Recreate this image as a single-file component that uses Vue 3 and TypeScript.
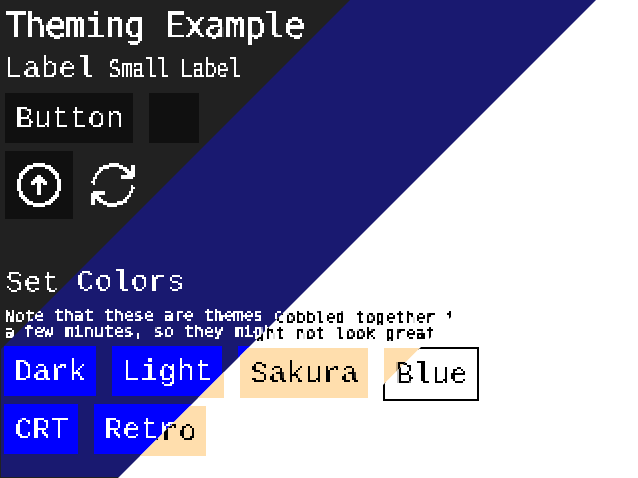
<script setup lang="ts">
type Layer = 'dark' | 'blue' | 'sand' | 'paper'
interface Word { text: string; on: Layer[] }

const layers: Layer[] = ['dark', 'blue', 'sand', 'paper']

const word = (text: string, ...on: Layer[]): Word => ({ text, on })

const heading: Word[] = [word('Set', 'dark'), word('Colors', 'blue')]
const note: Word[][] = [
  [
    word('Note', 'dark', 'blue'),
    ...['that', 'these', 'are', 'themes'].map((t) => word(t, 'blue')),
    word('cobbled', 'blue', 'sand'),
    word('together', 'sand'),
    word('i', 'sand'),
  ],
  [
    word('a', 'dark'),
    ...['few', 'minutes,', 'so', 'they'].map((t) => word(t, 'blue')),
    word('might', 'blue', 'sand'),
    ...['not', 'look', 'great'].map((t) => word(t, 'sand')),
  ],
]
const themes: Word[][] = [
  [word('Dark', 'blue'), word('Light', 'blue'), word('Sakura', 'sand'), word('Blue', 'sand', 'paper')],
  [word('CRT', 'blue'), word('Retro', 'blue', 'sand')],
]

// Pixel filters: each keeps one sample per 2px cell; the cut decides how heavy strokes become.
const filters = [
  { id: 'pixel', cut: -8 },
  { id: 'pixel-fine', cut: -12 },
]

type Cells = [number, number, number][]

const toPath = (cells: Cells): string =>
  cells.map(([y, a, b]) => `M${a} ${y}h${b - a + 1}v1h${a - b - 1}z`).join('')

const ring: Cells = []
for (let y = 0; y < 22; y++) {
  for (let x = 0; x < 22; x++) {
    const d = Math.hypot(x - 10.5, y - 10.5)
    if (d < 11 && d > 8.95) ring.push([y, x, x])
  }
}
const arrow: Cells = [
  [6, 10, 11], [7, 9, 12], [8, 8, 13], [9, 7, 14], [10, 7, 8], [10, 10, 11], [10, 13, 14],
  [11, 10, 11], [12, 10, 11], [13, 10, 11], [14, 10, 11], [15, 10, 11],
]
const half: Cells = [
  [0, 9, 13], [1, 6, 15], [1, 20, 21], [2, 4, 8], [2, 14, 17], [2, 20, 21], [3, 4, 5], [3, 16, 18], [3, 20, 21],
  [4, 3, 4], [4, 17, 21], [5, 2, 3], [5, 18, 21], [6, 2, 2], [6, 15, 21], [7, 1, 2], [7, 15, 20],
  [8, 1, 1], [9, 0, 1], [10, 1, 1],
]
const upIcon = toPath([...ring, ...arrow])
const syncIcon = toPath([...half, ...half.map(([y, a, b]): [number, number, number] => [21 - y, 21 - b, 21 - a])])
</script>

<template>
  <main class="screen">
    <svg class="defs" width="0" height="0" aria-hidden="true">
      <filter v-for="f in filters" :id="f.id" :key="f.id" primitiveUnits="userSpaceOnUse" x="-5%" y="-5%" width="110%" height="110%" color-interpolation-filters="sRGB">
        <feGaussianBlur in="SourceGraphic" stdDeviation="0.5" result="soft" />
        <feFlood x="0" y="0" width="1" height="1" flood-color="#000" result="dot" />
        <feOffset in="dot" dx="0" dy="0" x="0" y="0" width="2" height="2" result="cell" />
        <feTile in="cell" result="grid" />
        <feComposite in="soft" in2="grid" operator="in" result="p" />
        <feOffset in="p" dx="1" dy="0" result="p1" />
        <feOffset in="p" dx="0" dy="1" result="p2" />
        <feOffset in="p" dx="1" dy="1" result="p3" />
        <feMerge><feMergeNode in="p" /><feMergeNode in="p1" /><feMergeNode in="p2" /><feMergeNode in="p3" /></feMerge>
        <feComponentTransfer><feFuncA type="linear" slope="20" :intercept="f.cut" /></feComponentTransfer>
      </filter>
    </svg>
    <section v-for="layer in layers" :key="layer" class="layer" :class="layer">
      <div class="intro">
        <template v-if="layer === 'dark'">
          <h1 class="title pix">Theming Example</h1>
          <div class="labels">
            <span class="label fine">Label</span>
            <span class="small fine"><span class="narrow">Small Label</span></span>
          </div>
          <div class="row">
            <button class="btn"><span class="fine">Button</span></button>
            <button class="btn empty"></button>
          </div>
          <div class="row icons">
            <button class="icon filled"><svg viewBox="0 0 22 22" shape-rendering="crispEdges"><path :d="upIcon" /></svg></button>
            <button class="icon"><svg viewBox="0 0 22 22" shape-rendering="crispEdges"><path :d="syncIcon" /></svg></button>
          </div>
        </template>
      </div>
      <h2 class="heading">
        <span v-for="w in heading" :key="w.text" class="fine" :class="{ off: !w.on.includes(layer) }">{{ w.text }}</span>
      </h2>
      <div class="note">
        <p v-for="(line, i) in note" :key="i">
          <span v-for="w in line" :key="w.text" class="pix" :class="{ off: !w.on.includes(layer) }">{{ w.text }}</span>
        </p>
      </div>
      <div class="themes" :class="{ off: layer === 'dark' }">
        <div v-for="(line, i) in themes" :key="i" class="row">
          <button v-for="w in line" :key="w.text" class="btn"><span class="fine" :class="{ off: !w.on.includes(layer) }">{{ w.text }}</span></button>
        </div>
      </div>
    </section>
  </main>
</template>

<style>
body { margin: 0; overflow: hidden; }
</style>

<style scoped>
.screen { position: relative; width: 638px; height: 478px; overflow: hidden; background: #212121; font-family: "Liberation Mono", monospace; }
.defs { position: absolute; }
.layer { position: absolute; inset: 0; box-sizing: border-box; padding: var(--o) 0 0 var(--o); color: var(--fg); background: var(--bg); fill: var(--fg); }
.dark { --o: 5px; --bg: #212121; --fg: #fff; --btn: #101010; }
.blue { --o: 4px; --bg: #191970; --fg: #fff; --btn: #00f; clip-path: polygon(350px 0, 597px 0, 119px 478px, 119px 477px, 1px 477px, 1px 349px); }
.sand { --o: 6px; --bg: #fff; --fg: #000; --btn: #ffdead; clip-path: polygon(596px 0, 638px 0, 638px 478px, 118px 478px); }
.paper { --o: 7px; --bg: #fff; --fg: #000; --btn: #fff; clip-path: polygon(768px 0, 638px 130px, 638px 478px, 290px 478px); }
.paper .btn { box-shadow: 0 0 0 2px #000; }
.paper .themes .row .btn:not(:nth-child(4)), .off { visibility: hidden; }
.pix { filter: url(#pixel); white-space: pre; }
.fine { filter: url(#pixel-fine); white-space: pre; }
h1, h2, p { margin: 0; font-weight: 400; }
.intro { height: 255px; }
.title { width: 320px; height: 44px; margin-left: -1px; font: 35px/40px "DejaVu Sans Mono", monospace; letter-spacing: -1.1px; text-shadow: .5px 0 0 currentColor; }
.labels { display: flex; height: 44px; margin-left: -1px; font-size: 30px; line-height: 40px; }
.label { width: 104px; }
.small { width: 170px; }
.narrow { display: inline-block; font-size: 27px; transform: scaleX(.7407); transform-origin: 0 50%; -webkit-text-stroke: .3px; }
.row { display: flex; gap: 16px; }
.btn { height: 50px; padding: 0 10px; border: 0; color: var(--fg); background: var(--btn); font: 30px/50px "Liberation Mono", monospace; }
.btn .fine { display: block; height: 50px; line-height: 52px; }
.empty { width: 50px; }
.icons { margin-top: 8px; gap: 6px; }
.icon { width: 68px; height: 68px; padding: 12px; border: 0; background: none; }
.icon svg { display: block; width: 44px; height: 44px; fill: #fff; }
.filled { background: var(--btn); }
.heading { display: flex; gap: 18px; height: 46px; font-size: 30px; line-height: 46px; }
.note { height: 39px; margin-left: -1px; padding-top: 2px; font: 16.6px/16px "DejaVu Sans Mono", monospace; -webkit-text-stroke: 0.2px; }
.note p { display: flex; gap: 10px; }
.themes { display: grid; gap: 8px; }
</style>
